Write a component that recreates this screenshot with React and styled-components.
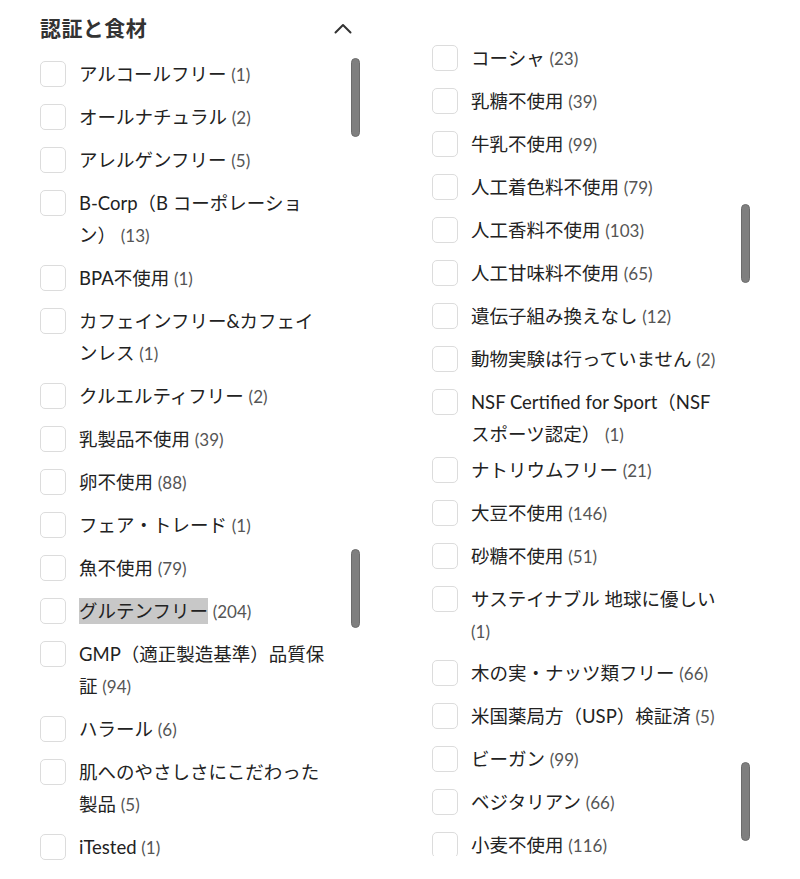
import React from 'react';
import styled, { createGlobalStyle } from 'styled-components';

const GlobalStyle = createGlobalStyle`
  html, body {
    margin: 0;
    padding: 0;
    background: #fff;
  }
  body {
    font-family: Lato, "Noto Sans CJK JP", "Noto Sans", sans-serif;
    color: #222;
  }
`;

const Page = styled.div`
  display: flex;
  width: 800px;
  height: 879px;
  overflow: hidden;
`;

const Panel = styled.section`
  position: relative;
  box-sizing: border-box;
  width: ${(p) => p.$width}px;
  padding: ${(p) => p.$top}px 0 0 40px;
  flex-shrink: 0;
`;

const Header = styled.div`
  display: flex;
  align-items: center;
  justify-content: space-between;
  width: 312px;
  height: 40px;
  margin-bottom: 10px;
  h3 {
    margin: 0;
    font-size: 21px;
    line-height: 28px;
    font-weight: 700;
    color: #333;
    letter-spacing: 0.02em;
  }
`;

const Viewport = styled.div`
  height: ${(p) => p.$height}px;
  overflow: hidden;
`;

const List = styled.ul`
  list-style: none;
  margin: 0;
  padding: 0;
  display: flex;
  flex-direction: column;
  gap: 11px;
`;

const Item = styled.li`
  display: flex;
  align-items: flex-start;
  gap: 13px;
  margin-top: ${(p) => p.$pull || 0}px;
`;

const Box = styled.span`
  box-sizing: border-box;
  width: 26px;
  height: 26px;
  margin-top: 3px;
  flex-shrink: 0;
  border: 1px solid #dcdcdc;
  border-radius: 5px;
  background: #fff;
`;

const Label = styled.span`
  max-width: 252px;
  font-size: 18.5px;
  line-height: 32px;
  color: #222;
  mark {
    background: #c8c8c8;
    color: inherit;
    padding: 2px 0;
    line-height: 1;
  }
  small {
    font-size: 17px;
    line-height: 1;
    color: #555;
  }
`;

const Thumb = styled.span`
  position: absolute;
  left: ${(p) => p.$x}px;
  top: ${(p) => p.$y}px;
  box-sizing: border-box;
  width: 9px;
  height: 79px;
  border-radius: 5px;
  background: #7f7f7f;
  border: 1px solid #6c6c6c;
`;

const Chevron = () => (
  <svg width="18" height="11" viewBox="0 0 18 11" fill="none">
    <polyline points="1.5,9.5 9,2 16.5,9.5" stroke="#333" strokeWidth="2" strokeLinecap="round" strokeLinejoin="round" />
  </svg>
);

const leftItems = [
  { name: 'アルコールフリー', count: 1 },
  { name: 'オールナチュラル', count: 2 },
  { name: 'アレルゲンフリー', count: 5 },
  { name: 'B-Corp（B コーポレーション）', count: 13 },
  { name: 'BPA不使用', count: 1 },
  { name: 'カフェインフリー&カフェインレス', count: 1 },
  { name: 'クルエルティフリー', count: 2 },
  { name: '乳製品不使用', count: 39 },
  { name: '卵不使用', count: 88 },
  { name: 'フェア・トレード', count: 1 },
  { name: '魚不使用', count: 79 },
  { name: 'グルテンフリー', count: 204, selected: true },
  { name: 'GMP（適正製造基準）品質保証', count: 94 },
  { name: 'ハラール', count: 6 },
  { name: '肌へのやさしさにこだわった製品', count: 5 },
  { name: 'iTested', count: 1 },
];

const rightItems = [
  { name: 'コーシャ', count: 23 },
  { name: '乳糖不使用', count: 39 },
  { name: '牛乳不使用', count: 99 },
  { name: '人工着色料不使用', count: 79 },
  { name: '人工香料不使用', count: 103 },
  { name: '人工甘味料不使用', count: 65 },
  { name: '遺伝子組み換えなし', count: 12 },
  { name: '動物実験は行っていません', count: 2 },
  { name: 'NSF Certified for Sport（NSFスポーツ認定）', count: 1 },
  { name: 'ナトリウムフリー', count: 21, pull: -7 },
  { name: '大豆不使用', count: 146 },
  { name: '砂糖不使用', count: 51 },
  { name: 'サステイナブル 地球に優しい', count: 1 },
  { name: '木の実・ナッツ類フリー', count: 66, pull: -1 },
  { name: '米国薬局方（USP）検証済', count: 5 },
  { name: 'ビーガン', count: 99 },
  { name: 'ベジタリアン', count: 66 },
  { name: '小麦不使用', count: 116 },
];

function FilterList({ items }) {
  return (
    <List>
      {items.map((item) => (
        <Item key={item.name} $pull={item.pull}>
          <Box />
          <Label>
            {item.selected ? <mark>{item.name}</mark> : item.name} <small>({item.count})</small>
          </Label>
        </Item>
      ))}
    </List>
  );
}

export default function App() {
  return (
    <>
      <GlobalStyle />
      <Page>
        <Panel $width={392} $top={8}>
          <Header>
            <h3>認証と食材</h3>
            <Chevron />
          </Header>
          <Viewport $height={821}>
            <FilterList items={leftItems} />
          </Viewport>
          <Thumb $x={351} $y={58} />
          <Thumb $x={351} $y={549} />
        </Panel>
        <Panel $width={408} $top={42}>
          <Viewport $height={814}>
            <FilterList items={rightItems} />
          </Viewport>
          <Thumb $x={349} $y={204} />
          <Thumb $x={349} $y={762} />
        </Panel>
      </Page>
    </>
  );
}
